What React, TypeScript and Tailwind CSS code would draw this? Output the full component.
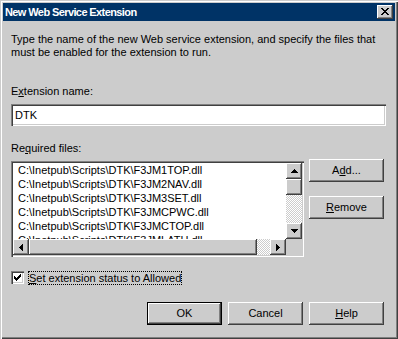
import React from "react";

const raised =
  "shadow-[inset_-1px_-1px_#404040,inset_1px_1px_#ffffff,inset_-2px_-2px_#808080]";
const sunken =
  "shadow-[inset_1px_1px_#808080,inset_2px_2px_#404040,inset_-1px_-1px_#ffffff,inset_-2px_-2px_#cccccc]";
const dither =
  "bg-[repeating-conic-gradient(#ffffff_0_25%,#cccccc_0_50%)] bg-[length:2px_2px]";

function Pixels({ rows, w, h }: { rows: string[]; w: number; h: number }) {
  const rects: React.ReactElement[] = [];
  rows.forEach((r, y) =>
    r.split("").forEach((c, x) => {
      if (c === "X") rects.push(<rect key={`${x}-${y}`} x={x} y={y} width={1} height={1} />);
    })
  );
  return (
    <svg width={w} height={h} viewBox={`0 0 ${w} ${h}`} shapeRendering="crispEdges" fill="#000">
      {rects}
    </svg>
  );
}

const closeX = ["XX....XX", ".XX..XX.", "..XXXX..", "...XX...", "..XXXX..", ".XX..XX.", "XX....XX"];
const check = ["......X", ".....XX", "X...XXX", "XX.XXX.", "XXXXX..", ".XXX...", "..X...."];
const up = ["...X...", "..XXX..", ".XXXXX.", "XXXXXXX"];
const down = ["XXXXXXX", ".XXXXX.", "..XXX..", "...X..."];
const left = ["...X", "..XX", ".XXX", "XXXX", ".XXX", "..XX", "...X"];
const right = ["X...", "XX..", "XXX.", "XXXX", "XXX.", "XX..", "X..."];

function ScrollBtn({ rows, w, h }: { rows: string[]; w: number; h: number }) {
  return (
    <div className={`w-[16px] h-[16px] bg-[#cccccc] ${raised} flex items-center justify-center shrink-0`}>
      <Pixels rows={rows} w={w} h={h} />
    </div>
  );
}

function Button({ children, def }: { children: React.ReactNode; def?: boolean }) {
  return (
    <div
      className={`w-[75px] h-[23px] bg-[#cccccc] flex items-center justify-center ${
        def ? "border border-black" : ""
      } ${raised}`}
    >
      <span className="leading-[13px]">{children}</span>
    </div>
  );
}

const files = [
  "C:\\Inetpub\\Scripts\\DTK\\F3JM1TOP.dll",
  "C:\\Inetpub\\Scripts\\DTK\\F3JM2NAV.dll",
  "C:\\Inetpub\\Scripts\\DTK\\F3JM3SET.dll",
  "C:\\Inetpub\\Scripts\\DTK\\F3JMCPWC.dll",
  "C:\\Inetpub\\Scripts\\DTK\\F3JMCTOP.dll",
  "C:\\Inetpub\\Scripts\\DTK\\F3JMLATH.dll",
];

export default function App() {
  return (
    <div
      className={`w-[398px] h-[339px] bg-[#cccccc] p-[3px] text-[11px] text-black font-['Liberation_Sans',Arial,sans-serif] shadow-[inset_1px_1px_#cccccc,inset_2px_2px_#ffffff,inset_-1px_-1px_#404040,inset_-2px_-2px_#808080] overflow-hidden`}
    >
      {/* Title bar */}
      <div className="h-[18px] bg-[#003366] flex items-center justify-between pl-[2px] pr-[2px]">
        <span className="text-white font-bold text-[11px] leading-[13px] tracking-[-0.6px]">
          New Web Service Extension
        </span>
        <div className={`w-[16px] h-[14px] bg-[#cccccc] ${raised} flex items-start justify-start pl-[4px] pt-[3px]`}>
          <Pixels rows={closeX} w={8} h={7} />
        </div>
      </div>

      <div className="pl-[8px] flex flex-col">
        <p className="mt-[12px] leading-[13px]">
          Type the name of the new Web service extension, and specify the files that
          <br />
          must be enabled for the extension to run.
        </p>

        <div className="mt-[26px] leading-[13px]">
          E<u>x</u>tension name:
        </div>
        <div className={`mt-[6px] w-[375px] h-[22px] bg-white ${sunken} pl-[4px] flex items-center`}>
          <span className="leading-[13px]">DTK</span>
        </div>

        <div className="mt-[16px] leading-[13px]">
          Re<u>q</u>uired files:
        </div>

        <div className="mt-[4px] flex">
          {/* List box */}
          <div className={`mt-[2px] w-[293px] h-[96px] bg-white ${sunken} p-[2px] flex flex-col`}>
            <div className="flex flex-1 min-h-0">
              <div className="flex-1 min-w-0 overflow-hidden pl-[5px]">
                {files.map((f) => (
                  <div key={f} className="h-[14px] leading-[14px] whitespace-nowrap">
                    {f}
                  </div>
                ))}
              </div>
              <div className="w-[16px] flex flex-col bg-[#cccccc]">
                <ScrollBtn rows={up} w={7} h={4} />
                <div className={`h-[16px] bg-[#cccccc] ${raised}`} />
                <div className={`flex-1 ${dither}`} />
                <ScrollBtn rows={down} w={7} h={4} />
              </div>
            </div>
            <div className="h-[16px] flex">
              <ScrollBtn rows={left} w={4} h={7} />
              <div className={`w-[228px] bg-[#cccccc] ${raised}`} />
              <div className={`flex-1 ${dither}`} />
              <ScrollBtn rows={right} w={4} h={7} />
              <div className="w-[16px] bg-[#cccccc]" />
            </div>
          </div>

          <div className="ml-[5px] flex flex-col gap-[14px]">
            <Button>
              A<u>d</u>d...
            </Button>
            <Button>
              <u>R</u>emove
            </Button>
          </div>
        </div>

        {/* Checkbox */}
        <div className="mt-[14px] flex items-start h-[15px]">
          <div className={`w-[13px] h-[13px] bg-white ${sunken} pl-[3px] pt-[3px]`}>
            <Pixels rows={check} w={7} h={7} />
          </div>
          <span className="ml-[4px] px-[1px] h-[14px] leading-[13px] outline outline-1 outline-dotted outline-black -outline-offset-1 flex items-center">
            <span>
              <u>S</u>et extension status to Allowed
            </span>
          </span>
        </div>

        <div className="mt-[16px] ml-[136px] flex gap-[6px]">
          <Button def>OK</Button>
          <Button>Cancel</Button>
          <Button>
            <u>H</u>elp
          </Button>
        </div>
      </div>
    </div>
  );
}
